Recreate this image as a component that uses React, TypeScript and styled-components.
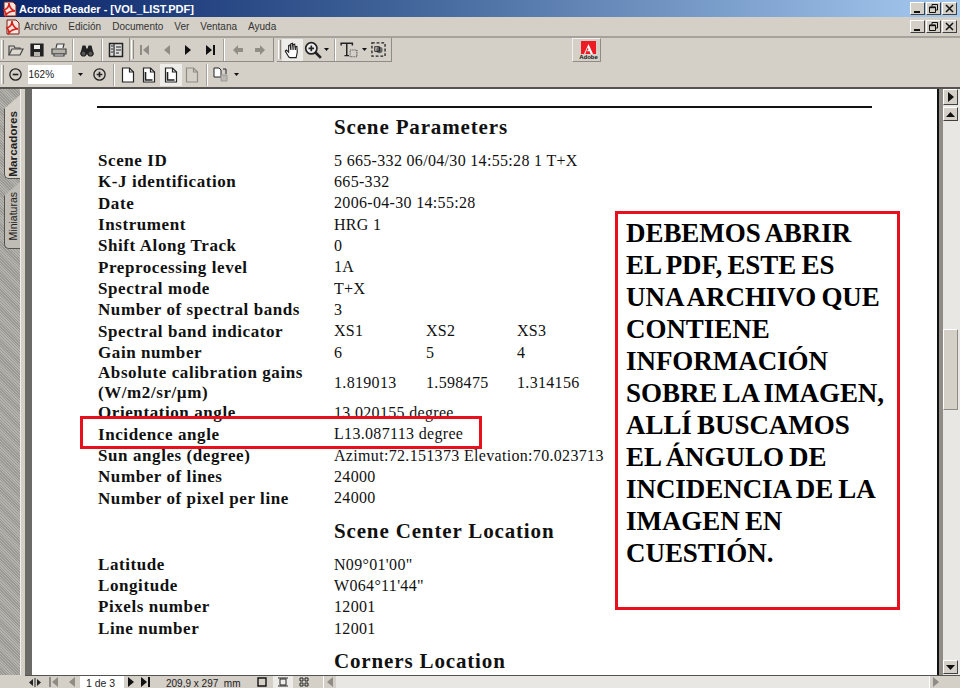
import { FunctionComponent, ReactNode } from "react";
import styled, { createGlobalStyle } from "styled-components";

const MENU = ["Archivo", "Edición", "Documento", "Ver", "Ventana", "Ayuda"];

const PARAMS: { label: ReactNode; values: string[]; tall?: boolean }[] = [
  { label: "Scene ID", values: ["5 665-332 06/04/30 14:55:28 1 T+X"] },
  { label: "K-J identification", values: ["665-332"] },
  { label: "Date", values: ["2006-04-30 14:55:28"] },
  { label: "Instrument", values: ["HRG 1"] },
  { label: "Shift Along Track", values: ["0"] },
  { label: "Preprocessing level", values: ["1A"] },
  { label: "Spectral mode", values: ["T+X"] },
  { label: "Number of spectral bands", values: ["3"] },
  { label: "Spectral band indicator", values: ["XS1", "XS2", "XS3"] },
  { label: "Gain number", values: ["6", "5", "4"] },
  {
    label: (
      <>
        Absolute calibration gains
        <br />
        (W/m2/sr/µm)
      </>
    ),
    values: ["1.819013", "1.598475", "1.314156"],
    tall: true,
  },
  { label: "Orientation angle", values: ["13.020155 degree"] },
  { label: "Incidence angle", values: ["L13.087113 degree"] },
  { label: "Sun angles (degree)", values: ["Azimut:72.151373 Elevation:70.023713"] },
  { label: "Number of lines", values: ["24000"] },
  { label: "Number of pixel per line", values: ["24000"] },
];

const CENTER = [
  { label: "Latitude", values: ["N09°01'00\""] },
  { label: "Longitude", values: ["W064°11'44\""] },
  { label: "Pixels number", values: ["12001"] },
  { label: "Line number", values: ["12001"] },
];

const NOTE = [
  "DEBEMOS ABRIR",
  "EL PDF, ESTE ES",
  "UNA ARCHIVO QUE",
  "CONTIENE",
  "INFORMACIÓN",
  "SOBRE LA IMAGEN,",
  "ALLÍ BUSCAMOS",
  "EL ÁNGULO DE",
  "INCIDENCIA DE LA",
  "IMAGEN EN",
  "CUESTIÓN.",
];

const Svg: FunctionComponent<{ size?: number; children: ReactNode }> = ({ size = 16, children }) => (
  <svg width={size} height={size} viewBox="0 0 16 16" fill="none" stroke="#222" strokeWidth="1.2">
    {children}
  </svg>
);

const AcrobatMark = ({ size = 16 }: { size?: number }) => (
  <svg width={size} height={size} viewBox="0 0 16 16">
    <path d="M2 1h9l3 3v11H2z" fill="#f3e6e0" stroke="#7a1c14" />
    <path d="M2 9c3-1 5-4 5-7 0 3 2 7 6 8-3 0-7 1-9 4 0-2-1-4-2-5z" fill="none" stroke="#d8201a" strokeWidth="1.6" />
  </svg>
);

const MinimizeGlyph = () => (
  <svg width="9" height="9" viewBox="0 0 9 9">
    <path d="M1 7h6v2H1z" fill="#111" />
  </svg>
);
const RestoreGlyph = () => (
  <svg width="9" height="9" viewBox="0 0 9 9" fill="none" stroke="#111">
    <path d="M3 2.500V.5h5.500V6H6.500" />
    <path d="M.5 3h6v5.500h-6z" fill="#d4d0c8" />
    <path d="M.5 3.500h6" strokeWidth="1.4" />
  </svg>
);
const CloseGlyph = () => (
  <svg width="9" height="9" viewBox="0 0 9 9" fill="none" stroke="#111" strokeWidth="1.5">
    <path d="M1 1l7 7M8 1L1 8" />
  </svg>
);
const CaptionButtons = () => (
  <WindowButtons>
    <CaptionButton><MinimizeGlyph /></CaptionButton>
    <CaptionButton><RestoreGlyph /></CaptionButton>
    <CaptionButton><CloseGlyph /></CaptionButton>
  </WindowButtons>
);

const OpenIcon = () => (
  <Svg>
    <path d="M1 13V4h5l1 2h5v2" stroke="#444" />
    <path d="M1 13l3-6h11l-3 6z" fill="#dedad0" stroke="#444" />
  </Svg>
);
const SaveIcon = () => (
  <Svg>
    <path d="M2 2h12v12H2z" fill="#222" />
    <path d="M5 3h6v4H5z" fill="#f0eee8" stroke="none" />
    <path d="M5 10h6v4H5z" fill="#b8b5ac" stroke="none" />
  </Svg>
);
const PrintIcon = () => (
  <Svg>
    <path d="M5 6l1-4h7l-1 4" fill="#eee" stroke="#444" />
    <path d="M1 7h14v5H1z" fill="#b5b2a9" stroke="#444" />
    <path d="M3 12h10v2H3z" fill="#eee" stroke="#444" />
  </Svg>
);
const FindIcon = () => (
  <Svg>
    <path d="M2 12l2-8h2l1 3h2l1-3h2l2 8z" fill="#222" />
    <circle cx="4.500" cy="11.500" r="2.500" fill="#555" />
    <circle cx="11.500" cy="11.500" r="2.500" fill="#555" />
  </Svg>
);
const PanelIcon = () => (
  <Svg>
    <path d="M1.500 1.500h13v13h-13z" fill="#ddd" strokeWidth="1.500" />
    <path d="M6 2v12" />
    <path d="M3 4h2M3 7h2M3 10h2M8 5h5M8 8h5M8 11h3" strokeWidth="1" />
  </Svg>
);
const FirstIcon = ({ color = "#111" }: { color?: string }) => (
  <svg width="12" height="14" viewBox="0 0 12 14">
    <path d="M1 2h2v10H1zM10 2v10L4 7z" fill={color} />
  </svg>
);
const LastIcon = ({ color = "#111" }: { color?: string }) => (
  <svg width="12" height="14" viewBox="0 0 12 14">
    <path d="M9 2h2v10H9zM2 2v10l6-5z" fill={color} />
  </svg>
);
const PrevIcon = ({ color = "#111" }: { color?: string }) => (
  <svg width="10" height="14" viewBox="0 0 10 14">
    <path d="M8 2v10L2 7z" fill={color} />
  </svg>
);
const NextIcon = ({ color = "#111" }: { color?: string }) => (
  <svg width="10" height="14" viewBox="0 0 10 14">
    <path d="M2 2v10l6-5z" fill={color} />
  </svg>
);
const BackIcon = () => (
  <svg width="12" height="14" viewBox="0 0 12 14">
    <path d="M1 7l5-5v3h5v4H6v3z" fill="#918e86" />
  </svg>
);
const ForwardIcon = () => (
  <svg width="12" height="14" viewBox="0 0 12 14">
    <path d="M11 7L6 2v3H1v4h5v3z" fill="#918e86" />
  </svg>
);
const HandIcon = () => (
  <Svg size={18}>
    <path
      d="M5 14L2 9l1-1 2 2V4l1.300-.6L7 8V2.500l1.400-.5L9 8V3l1.400-.2L11 8V5l1.300-.2.4 5-1 5H6z"
      fill="#fff"
      strokeWidth="1"
    />
  </Svg>
);
const ZoomIcon = () => (
  <Svg size={18}>
    <circle cx="6.500" cy="6.500" r="5" fill="#eee" strokeWidth="1.500" />
    <path d="M10 10l5 5" strokeWidth="2.400" />
    <path d="M4 6.500h5M6.500 4v5" strokeWidth="1.500" />
  </Svg>
);
const TextIcon = () => (
  <svg width="18" height="18" viewBox="0 0 16 16" fill="none">
    <path d="M1 4V2h10v2M6 2v11M4 13h4" stroke="#222" strokeWidth="1.300" />
    <path d="M9 8h6v6H9z" stroke="#444" strokeDasharray="1 1" />
  </svg>
);
const SnapshotIcon = () => (
  <svg width="15" height="15" viewBox="0 0 16 16" fill="none">
    <path d="M1 1h14v14H1z" stroke="#222" strokeWidth="1.400" strokeDasharray="3 2" />
    <circle cx="9" cy="8.500" r="3.400" fill="#666" />
    <path d="M4 5h5v5H4z" stroke="#222" />
  </svg>
);
const MinusIcon = () => (
  <Svg size={15}>
    <circle cx="8" cy="8" r="6" fill="#d4d0c8" strokeWidth="1.400" />
    <path d="M5 8h6" strokeWidth="1.800" />
  </Svg>
);
const PlusIcon = () => (
  <Svg size={15}>
    <circle cx="8" cy="8" r="6" fill="#d4d0c8" strokeWidth="1.400" />
    <path d="M5 8h6M8 5v6" strokeWidth="1.800" />
  </Svg>
);
const PageIcon = ({ inset, disabled }: { inset?: boolean; disabled?: boolean }) => (
  <svg width="14" height="16" viewBox="0 0 14 16" fill="none" stroke={disabled ? "#8f8c85" : "#222"} strokeWidth="1.200">
    <path d="M1.500 1h7l4 4v10h-11z" fill={disabled ? "#d4d0c8" : "#fff"} />
    <path d="M8.500 1v4h4" />
    {inset && <path d="M3.500 5v8h7" strokeWidth="1.600" />}
  </svg>
);
const CopyIcon = () => (
  <svg width="16" height="16" viewBox="0 0 16 16" fill="none" stroke="#222">
    <path d="M1 1h5l2 2v7H1z" fill="#fff" />
    <path d="M10 2h3v5" />
    <path d="M8 8h6v6H8z" fill="#bdb9b0" stroke="#999" />
  </svg>
);
const AdobeMark = () => (
  <svg width="15" height="13" viewBox="0 0 15 13">
    <path d="M0 0h15v13H0z" fill="#ed1c24" />
    <path d="M7.500 3L12 13H9.600L8.600 10.300H6L7.500 8.200 6.800 6.500 4.200 13H3z" fill="#fff" />
  </svg>
);
const Drop = () => (
  <svg width="5" height="3" viewBox="0 0 5 3">
    <path d="M0 0h5L2.500 3z" fill="#111" />
  </svg>
);
const DropLarge = ({ up }: { up?: boolean }) => (
  <svg width="9" height="5" viewBox="0 0 9 5">
    <path d={up ? "M0 5h9L4.500 0z" : "M0 0h9L4.500 5z"} fill="#111" />
  </svg>
);

const App: FunctionComponent = () => {
  return (
    <Window>
      <GlobalStyle />
      <TitleBar>
        <AcrobatMark />
        <TitleText>Acrobat Reader - [VOL_LIST.PDF]</TitleText>
        <CaptionButtons />
      </TitleBar>
      <MenuBar>
        <MenuMark>
          <AcrobatMark />
        </MenuMark>
        {MENU.map((item) => (
          <MenuItem key={item}>{item}</MenuItem>
        ))}
        <CaptionButtons />
      </MenuBar>
      <ToolRow>
        <ToolGroup>
          <Handle />
          <Tool><OpenIcon /></Tool>
          <Tool><SaveIcon /></Tool>
          <Tool><PrintIcon /></Tool>
          <Divider />
          <Tool><FindIcon /></Tool>
          <Divider />
          <Tool><PanelIcon /></Tool>
        </ToolGroup>
        <ToolGroup $after={3}>
          <Handle />
          <Tool><FirstIcon color="#8f8c85" /></Tool>
          <Tool><PrevIcon color="#8f8c85" /></Tool>
          <Tool><NextIcon /></Tool>
          <Tool><LastIcon /></Tool>
          <Divider />
          <Tool><BackIcon /></Tool>
          <Tool><ForwardIcon /></Tool>
        </ToolGroup>
        <ToolGroup>
          <Handle />
          <Tool $active><HandIcon /></Tool>
          <Tool $width={19}><ZoomIcon /></Tool>
          <DropTool><Drop /></DropTool>
          <Divider />
          <Tool><TextIcon /></Tool>
          <DropTool><Drop /></DropTool>
          <Tool $width={20}><SnapshotIcon /></Tool>
        </ToolGroup>
        <AdobeButton>
          <AdobeMark />
          <AdobeLabel>Adobe</AdobeLabel>
        </AdobeButton>
      </ToolRow>
      <ZoomRow>
        <Handle />
        <Tool><MinusIcon /></Tool>
        <ZoomField>162%</ZoomField>
        <DropTool $width={17}><Drop /></DropTool>
        <Tool><PlusIcon /></Tool>
        <Divider />
        <Tool><PageIcon /></Tool>
        <Tool><PageIcon inset /></Tool>
        <Tool $active><PageIcon inset /></Tool>
        <Tool><PageIcon disabled /></Tool>
        <Divider />
        <Tool><CopyIcon /></Tool>
        <DropTool><Drop /></DropTool>
      </ZoomRow>
      <Workspace>
        <SidePanel>
          <SideTab $active><SideTabLabel>Marcadores</SideTabLabel></SideTab>
          <SideTab><SideTabLabel>Miniaturas</SideTabLabel></SideTab>
        </SidePanel>
        <Gutter />
        <PageView>
          <Rule />
          <SectionTitle $height={42} $line={38}>Scene Parameters</SectionTitle>
          {PARAMS.map((row, idx) => (
            <ParamRow key={idx} $tall={row.tall}>
              <ParamLabel>{row.label}</ParamLabel>
              {row.values.map((value) => (
                <ParamValue key={value}>{value}</ParamValue>
              ))}
            </ParamRow>
          ))}
          <SectionTitle $height={45} $line={44}>Scene Center Location</SectionTitle>
          {CENTER.map((row) => (
            <ParamRow key={row.label}>
              <ParamLabel>{row.label}</ParamLabel>
              {row.values.map((value) => (
                <ParamValue key={value}>{value}</ParamValue>
              ))}
            </ParamRow>
          ))}
          <SectionTitle $height={45} $line={44}>Corners Location</SectionTitle>
          <IncidenceMark />
          <NoteBox>
            {NOTE.map((line) => (
              <NoteLine key={line}>{line}</NoteLine>
            ))}
          </NoteBox>
        </PageView>
        <ScrollBar>
          <ScrollButton><NextIcon /></ScrollButton>
          <ScrollButton $top={2}><DropLarge up /></ScrollButton>
          <ScrollThumb />
          <ScrollButton $end><DropLarge /></ScrollButton>
        </ScrollBar>
      </Workspace>
      <StatusBar>
        <StatusLead>
          <StatusCell $width={19}>
            <svg width="12" height="9" viewBox="0 0 12 9">
              <path d="M0 4.500L4 1v7zM12 4.500L8 1v7zM5.500 0h1v9h-1z" fill="#222" />
            </svg>
          </StatusCell>
          <StatusCell $width={20}><FirstIcon color="#8f8c85" /></StatusCell>
          <StatusCell $width={16}><PrevIcon color="#8f8c85" /></StatusCell>
          <PageField>1 de 3</PageField>
          <StatusCell $width={14}><NextIcon /></StatusCell>
          <StatusCell $width={14}><LastIcon /></StatusCell>
          <PageSize>209,9 x 297  mm</PageSize>
          <StatusCell $width={23}>
            <svg width="10" height="10" viewBox="0 0 10 10">
              <path d="M1 1h8v8H1z" fill="none" stroke="#111" strokeWidth="1.400" />
            </svg>
          </StatusCell>
          <StatusCell $width={20} $active>
            <svg width="12" height="10" viewBox="0 0 12 10">
              <path d="M1 1h10M1 9h10M3 2h6v6H3z" fill="none" stroke="#222" />
            </svg>
          </StatusCell>
          <StatusCell $width={22}>
            <svg width="12" height="10" viewBox="0 0 12 10">
              <path d="M2 1h3v3H2zM7 1h3v3H7zM2 6h3v3H2zM7 6h3v3H7z" fill="none" stroke="#222" />
            </svg>
          </StatusCell>
        </StatusLead>
        <HScroll>
          <ScrollArrow><PrevIcon color="#8f8c85" /></ScrollArrow>
          <ScrollArrow><NextIcon color="#8f8c85" /></ScrollArrow>
        </HScroll>
        <Corner />
      </StatusBar>
    </Window>
  );
};

const GlobalStyle = createGlobalStyle`
  html, body {
    margin: 0;
    padding: 0;
    background: #d4d0c8;
  }
`;

const Window = styled.div`
  position: relative;
  display: flex;
  flex-direction: column;
  width: 960px;
  height: 688px;
  overflow: hidden;
  background: #d4d0c8;
  font-family: "Liberation Sans", Arial, sans-serif;
`;

const TitleBar = styled.div`
  display: flex;
  align-items: center;
  flex: 0 0 17px;
  padding: 0 2px;
  gap: 1px;
  background: linear-gradient(90deg, #0a246a 0%, #3e6197 40%, #a6caf0 100%);
`;

const TitleText = styled.span`
  color: #fff;
  font-size: 11px;
  font-weight: 700;
  letter-spacing: -0.02px;
`;

const WindowButtons = styled.div`
  display: flex;
  gap: 1px;
  margin-left: auto;
  padding-right: 1px;
`;

const CaptionButton = styled.div`
  display: flex;
  align-items: center;
  justify-content: center;
  width: 15px;
  height: 13px;
  background: #d4d0c8;
  border: 1px solid;
  border-color: #fff #404040 #404040 #fff;
  box-sizing: border-box;
`;

const MenuBar = styled.div`
  display: flex;
  align-items: center;
  flex: 0 0 19px;
  padding: 0 2px 0 5px;
  font-size: 10px;
  color: #333;
`;

const MenuMark = styled.div`
  display: flex;
  width: 19px;
`;

const MenuItem = styled.span`
  margin-right: 11px;
`;

const ToolRow = styled.div`
  display: flex;
  align-items: center;
  flex: 0 0 26px;
  box-sizing: border-box;
  border-top: 2px solid #a5a29b;
`;

const ToolGroup = styled.div<{ $after?: number }>`
  display: flex;
  align-items: center;
  height: 24px;
  padding-right: 2px;
  margin-right: ${(props) => props.$after ?? 0}px;
  border-right: 1px solid #8f8c85;
  border-bottom: 1px solid #8f8c85;
  box-sizing: border-box;
`;

const ZoomRow = styled.div`
  display: flex;
  align-items: center;
  flex: 0 0 27px;
  box-sizing: border-box;
  border-bottom: 2px solid #55534f;
`;

const Handle = styled.div`
  flex: 0 0 3px;
  height: 19px;
  margin: 0 1px;
  border-left: 1px solid #fff;
  border-right: 1px solid #8f8c85;
  box-sizing: border-box;
`;

const Tool = styled.div<{ $active?: boolean; $width?: number }>`
  display: flex;
  align-items: center;
  justify-content: center;
  flex: 0 0 ${(props) => props.$width ?? 21.5}px;
  height: 22px;
  background: ${(props) => (props.$active ? "#eeece8" : "transparent")};
`;

const DropTool = styled.div<{ $width?: number }>`
  display: flex;
  align-items: center;
  justify-content: center;
  flex: 0 0 ${(props) => props.$width ?? 9}px;
  height: 22px;
`;

const Divider = styled.div`
  flex: 0 0 2px;
  height: 22px;
  margin: 0 2.500px;
  box-sizing: border-box;
  background: #a5a29b;
  border-right: 1px solid #fff;
`;

const AdobeButton = styled.div`
  display: flex;
  flex-direction: column;
  align-items: center;
  justify-content: center;
  width: 29px;
  height: 24px;
  margin-left: 180.500px;
  padding-left: 4px;
  border: 1px solid;
  border-color: #f4f2ee #8f8c85 #8f8c85 #f4f2ee;
  box-sizing: border-box;
`;

const AdobeLabel = styled.span`
  font-size: 6px;
  font-weight: 700;
  line-height: 6px;
  color: #111;
`;

const ZoomField = styled.div`
  flex: 0 0 44px;
  height: 19px;
  margin-left: 1px;
  padding-left: 1px;
  background: #fff;
  box-sizing: border-box;
  color: #222;
  font-size: 10px;
  line-height: 20px;
`;

const Workspace = styled.div`
  display: flex;
  flex: 1;
  min-height: 0;
`;

const SidePanel = styled.div`
  display: flex;
  flex: 0 0 20px;
  flex-direction: column;
  align-items: flex-end;
  padding-top: 6px;
  box-sizing: border-box;
  background: repeating-linear-gradient(45deg, #9b9994 0 1px, #b5b3ae 1px 2px);
`;

const SideTab = styled.div<{ $active?: boolean }>`
  display: flex;
  align-items: center;
  justify-content: center;
  width: 16px;
  height: ${(props) => (props.$active ? 84 : 67)}px;
  margin-top: ${(props) => (props.$active ? 0 : 3)}px;
  padding-top: ${(props) => (props.$active ? 14 : 2)}px;
  background: ${(props) => (props.$active ? "#d4d0c8" : "#bfbcb5")};
  border: solid #55534f;
  border-width: 0 0 1px 1px;
  border-radius: 0 0 0 5px;
  box-sizing: border-box;
  clip-path: polygon(0 14px, 100% 0, 100% 100%, 0 100%);
  color: #222;
  font-size: ${(props) => (props.$active ? 11.700 : 10.500)}px;
  font-weight: ${(props) => (props.$active ? 700 : 400)};
`;

const SideTabLabel = styled.span`
  writing-mode: vertical-rl;
  transform: rotate(180deg);
`;

const Gutter = styled.div`
  flex: 0 0 12px;
  box-sizing: border-box;
  background: #d4d0c8;
  border-left: 1px solid #efeeea;
  border-right: 7px solid #6b6a67;
`;

const PageView = styled.div`
  flex: 0 0 907px;
  padding: 17px 0 0 65px;
  box-sizing: border-box;
  overflow: hidden;
  background: #fff;
  border-right: 2px solid #111;
  color: #111;
  font-family: "Liberation Serif", "Times New Roman", serif;
`;

const Rule = styled.div`
  width: 775px;
  height: 2px;
  background: #111;
`;

const SectionTitle = styled.div<{ $height: number; $line: number }>`
  height: ${(props) => props.$height}px;
  padding-left: 237px;
  box-sizing: border-box;
  font-size: 21px;
  font-weight: 700;
  letter-spacing: 0.85px;
  line-height: ${(props) => props.$line}px;
`;

const ParamRow = styled.div<{ $tall?: boolean }>`
  display: grid;
  grid-template-columns: 237px 92px 91px 1fr;
  align-items: center;
  height: ${(props) => (props.$tall ? 39 : 21.33)}px;
  white-space: nowrap;
`;

const ParamLabel = styled.div`
  margin-left: 1px;
  font-size: 17px;
  font-weight: 700;
  letter-spacing: 0.58px;
  line-height: 19.500px;
`;

const ParamValue = styled.div`
  font-size: 16px;
  letter-spacing: 0.32px;
`;

const IncidenceMark = styled.div`
  position: absolute;
  left: 80px;
  top: 416px;
  width: 402px;
  height: 33px;
  border: 3px solid #e8101c;
  box-sizing: border-box;
`;

const NoteBox = styled.div`
  position: absolute;
  left: 615px;
  top: 211px;
  width: 285px;
  height: 399px;
  padding: 3px 0 0 8px;
  background: #fff;
  border: 3px solid #e8101c;
  box-sizing: border-box;
  color: #000;
  font-size: 27px;
  font-weight: 700;
  letter-spacing: -0.05px;
  word-spacing: -1.500px;
`;

const NoteLine = styled.div`
  height: 32px;
  line-height: 32px;
  white-space: nowrap;
`;

const ScrollBar = styled.div`
  display: flex;
  flex: 0 0 21px;
  flex-direction: column;
  align-items: flex-start;
  box-sizing: border-box;
  padding: 0 2px 1px 0;
  background: #e9e7e3;
  border-left: 4px solid #8f8c85;
`;

const ScrollButton = styled.div<{ $top?: number; $end?: boolean }>`
  display: flex;
  align-items: center;
  justify-content: center;
  flex: 0 0 14px;
  width: 15px;
  margin-top: ${(props) => (props.$end ? "auto" : `${props.$top ?? 0}px`)};
  background: #d4d0c8;
  border: 1px solid;
  border-color: #fff #404040 #404040 #fff;
  box-sizing: border-box;
`;

const ScrollThumb = styled(ScrollButton)`
  flex: 0 0 81px;
  margin-top: 208px;
  border-color: #fff #8f8c85 #8f8c85 #fff;
`;

const StatusBar = styled.div`
  display: flex;
  flex: 0 0 12px;
  box-sizing: content-box;
  border-top: 1px solid #55534f;
  margin-left: 25px;
  overflow: hidden;
  font-size: 10.500px;
  color: #222;
`;

const StatusLead = styled.div`
  display: flex;
  align-items: center;
  flex: 0 0 298px;
`;

const StatusCell = styled.div<{ $width: number; $active?: boolean }>`
  display: flex;
  align-items: center;
  justify-content: center;
  flex: 0 0 ${(props) => props.$width}px;
  height: 12px;
  overflow: hidden;
  background: ${(props) => (props.$active ? "#eeece8" : "transparent")};
`;

const PageField = styled.div`
  flex: 0 0 44px;
  height: 12px;
  padding-left: 6px;
  box-sizing: border-box;
  background: #fff;
  line-height: 15px;
`;

const PageSize = styled.div`
  flex: 0 0 98px;
  height: 12px;
  padding-left: 14px;
  box-sizing: border-box;
  font-size: 10px;
  line-height: 15px;
  white-space: pre;
`;

const HScroll = styled.div`
  display: flex;
  flex: 0 0 619px;
  justify-content: space-between;
  background: #e9e7e3;
`;

const ScrollArrow = styled.div`
  display: flex;
  align-items: center;
  justify-content: center;
  width: 13px;
  height: 12px;
  overflow: hidden;
  background: #d4d0c8;
  border-left: 1px solid #fff;
  box-sizing: border-box;
`;

const Corner = styled.div`
  flex: 1;
  background: #d4d0c8;
`;

export default App;
